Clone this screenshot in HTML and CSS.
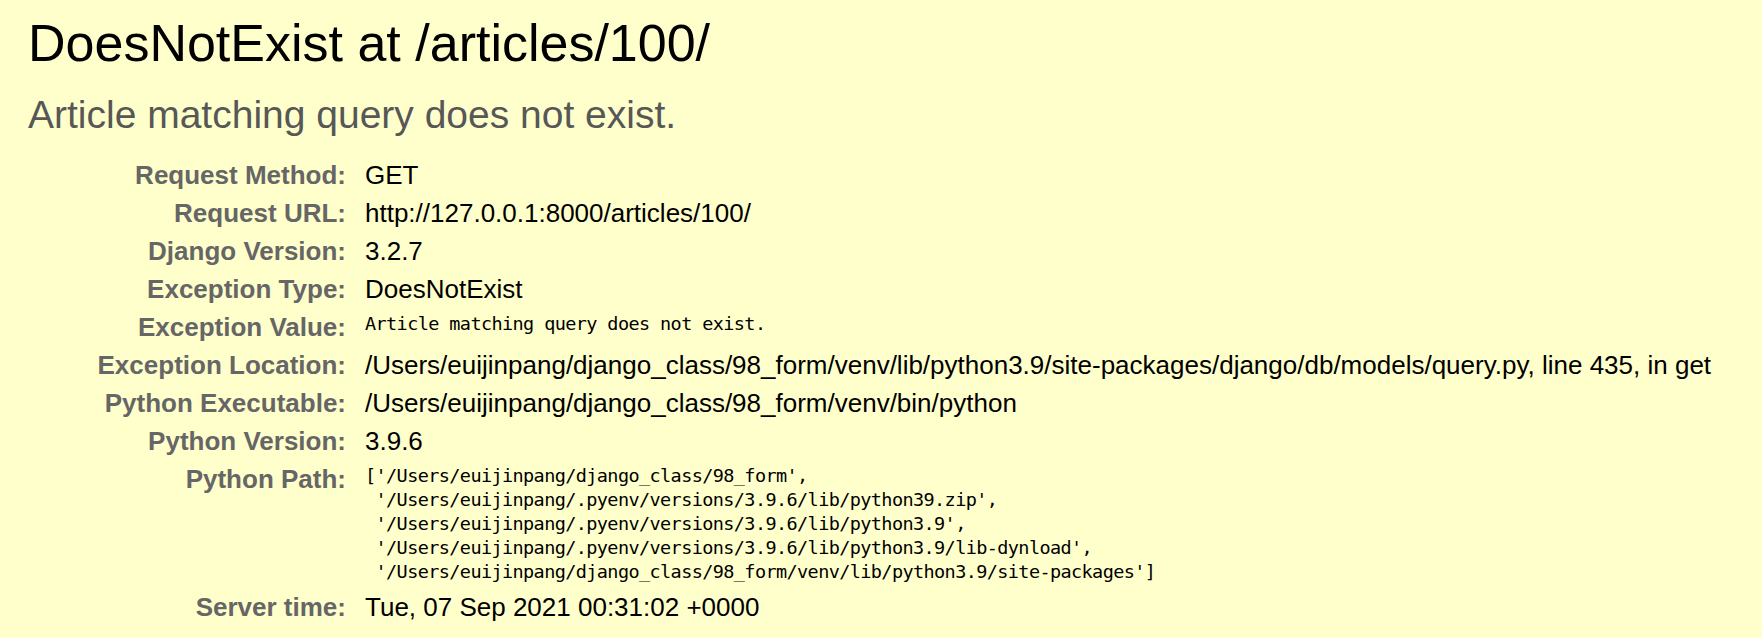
FILE: index.html
```
<!DOCTYPE html>
<html lang="en">
<head>
<meta charset="utf-8">
<title>DoesNotExist at /articles/100/</title>
<link rel="stylesheet" href="styles.css">
</head>
<body>
<div class="summary">
  <h1 class="title">DoesNotExist at /articles/100/</h1>
  <pre class="exception-value">Article matching query does not exist.</pre>
  <table class="meta">
    <tbody>
      <tr><th>Request Method:</th><td>GET</td></tr>
      <tr><th>Request URL:</th><td>http://127.0.0.1:8000/articles/100/</td></tr>
      <tr><th>Django Version:</th><td>3.2.7</td></tr>
      <tr><th>Exception Type:</th><td>DoesNotExist</td></tr>
      <tr><th>Exception Value:</th><td><pre class="mono">Article matching query does not exist.</pre></td></tr>
      <tr><th>Exception Location:</th><td><span class="fname">/Users/euijinpang/django_class/98_form/venv/lib/python3.9/site-packages/django/db/models/query.py</span>, line 435, in get</td></tr>
      <tr><th>Python Executable:</th><td>/Users/euijinpang/django_class/98_form/venv/bin/python</td></tr>
      <tr><th>Python Version:</th><td>3.9.6</td></tr>
      <tr><th>Python Path:</th><td><pre class="mono">['/Users/euijinpang/django_class/98_form',
 '/Users/euijinpang/.pyenv/versions/3.9.6/lib/python39.zip',
 '/Users/euijinpang/.pyenv/versions/3.9.6/lib/python3.9',
 '/Users/euijinpang/.pyenv/versions/3.9.6/lib/python3.9/lib-dynload',
 '/Users/euijinpang/django_class/98_form/venv/lib/python3.9/site-packages']</pre></td></tr>
      <tr><th>Server time:</th><td>Tue, 07 Sep 2021 00:31:02 +0000</td></tr>
    </tbody>
  </table>
</div>
</body>
</html>
```
FILE: styles.css
```
html, body {
  margin: 0;
  padding: 0;
  background: #ffffcc;
}

body {
  font-family: "Liberation Sans", Arial, Helvetica, sans-serif;
  color: #000;
}

.summary {
  background: #ffffcc;
  padding: 13px 20px 40px 28px;
}

.title {
  margin: 0;
  font-size: 52px;
  line-height: 60px;
  font-weight: normal;
  color: #000;
}

.exception-value {
  margin: 19px 0 19px 0;
  font-family: "Liberation Sans", Arial, Helvetica, sans-serif;
  font-size: 39px;
  line-height: 45px;
  color: #575757;
  white-space: pre-wrap;
}

.meta {
  border: none;
  border-collapse: collapse;
  background: transparent;
  width: 100%;
  margin: 0;
}

.meta th,
.meta td {
  vertical-align: top;
  padding: 4px 6px;
  font-size: 26px;
  line-height: 30px;
}

.meta th {
  width: 312px;
  text-align: right;
  color: #666;
  font-weight: bold;
  padding-right: 13px;
  white-space: nowrap;
}

.meta td {
  white-space: nowrap;
}

.mono {
  margin: 0;
  font-family: "DejaVu Sans Mono", "Liberation Mono", monospace;
  font-size: 18.5px;
  line-height: 24px;
  letter-spacing: -0.6px;
  white-space: pre;
  color: #000;
}
```
